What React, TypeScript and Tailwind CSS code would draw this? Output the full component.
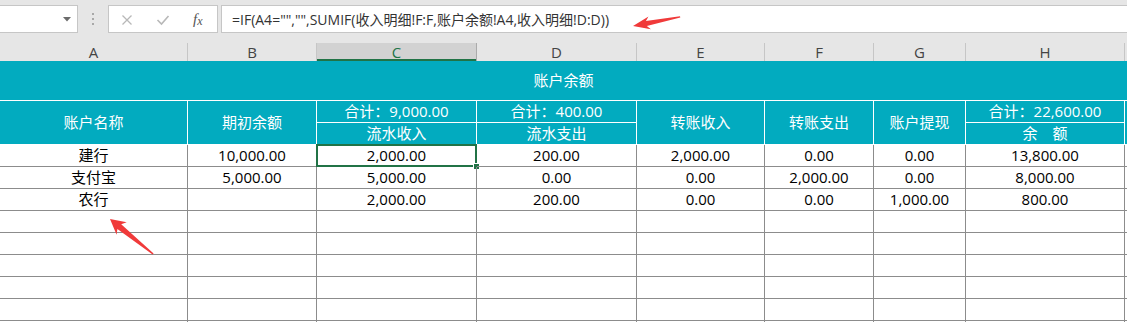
import React from "react";

const rows: string[][] = [
  ["建行", "10,000.00", "2,000.00", "200.00", "2,000.00", "0.00", "0.00", "13,800.00"],
  ["支付宝", "5,000.00", "5,000.00", "0.00", "0.00", "2,000.00", "0.00", "8,000.00"],
  ["农行", "", "2,000.00", "200.00", "0.00", "0.00", "1,000.00", "800.00"],
  ["", "", "", "", "", "", "", ""],
  ["", "", "", "", "", "", "", ""],
  ["", "", "", "", "", "", "", ""],
  ["", "", "", "", "", "", "", ""],
  ["", "", "", "", "", "", "", ""],
  ["", "", "", "", "", "", "", ""],
];

const letters = ["A", "B", "C", "D", "E", "F", "G", "H"];

const cols = "grid grid-cols-[188px_129px_160px_160px_128px_109px_92px_159px_1fr]";

function Arrows() {
  return (
    <svg
      className="pointer-events-none absolute left-0 top-0"
      width="1127"
      height="322"
      viewBox="0 0 1127 322"
    >
      <polygon
        fill="#f03a3a"
        points="633,26 648.5,16.4 645.9,21.0 680,16.2 680.3,17.6 646.8,25.9 650.9,29.2"
      />
      <polygon
        fill="#f03a3a"
        points="110,219 126.7,222.3 121.2,224.2 153.6,253.6 152.6,254.6 117.4,228.9 116.6,234.7"
      />
    </svg>
  );
}

export default function App() {
  return (
    <div className="relative h-[322px] w-[1127px] overflow-hidden bg-white font-['Open_Sans','Noto_Sans_CJK_SC',sans-serif]">
      {/* formula bar */}
      <div className="flex h-[43px] items-start bg-[#e6e6e6] pt-[5px]">
        <div className="relative h-[28px] w-[78px] border border-l-0 border-[#c6c6c6] bg-white">
          <svg className="absolute left-[63px] top-[11px]" width="8" height="5" viewBox="0 0 8 5">
            <polygon points="0,0 8,0 4,4.5" fill="#6b6b6b" />
          </svg>
        </div>
        <div className="flex h-[28px] w-[30px] flex-col items-center justify-center gap-[3px]">
          <div className="h-[2px] w-[2px] bg-[#a8a8a8]" />
          <div className="h-[2px] w-[2px] bg-[#a8a8a8]" />
          <div className="h-[2px] w-[2px] bg-[#a8a8a8]" />
        </div>
        <div className="relative h-[28px] w-[110px] border border-[#c6c6c6] bg-white">
          <svg className="absolute left-[12px] top-[8px]" width="12" height="12" viewBox="0 0 12 12">
            <path d="M1.5 1.5 L10.5 10.5 M10.5 1.5 L1.5 10.5" stroke="#b8b8b8" strokeWidth="1.3" fill="none" />
          </svg>
          <svg className="absolute left-[47px] top-[8px]" width="14" height="12" viewBox="0 0 14 12">
            <path d="M1.5 6 L5.5 10 L12.5 2" stroke="#b8b8b8" strokeWidth="1.6" fill="none" />
          </svg>
          <div className="absolute left-[84px] top-[3px] font-['Liberation_Serif',serif] text-[15px] italic leading-[20px] text-[#555]">
            f<span className="relative top-[1px] text-[12px]">x</span>
          </div>
        </div>
        <div className="ml-[3px] flex h-[28px] flex-1 items-center border border-r-0 border-[#c6c6c6] bg-white pl-[10px] text-[14px] text-[#333]">
          =IF(A4="","",SUMIF(收入明细!F:F,账户余额!A4,收入明细!D:D))
        </div>
      </div>

      {/* column headers */}
      <div className={`${cols} h-[18px] bg-[#e6e6e6]`}>
        {letters.map((l) => (
          <div
            key={l}
            className={
              l === "C"
                ? "flex items-center justify-center border-r border-[#ababab] bg-[#d2d2d2] text-[15px] leading-none text-[#217346] shadow-[inset_0_-2px_0_#217346]"
                : "flex items-center justify-center border-r border-[#c6c6c6] text-[15px] leading-none text-[#444]"
            }
          >
            {l}
          </div>
        ))}
        <div />
      </div>

      {/* teal header */}
      <div className={`${cols} grid-rows-[40px_22px_22px] bg-[#02abbf] text-[15px] leading-none text-white`}>
        <div className="col-span-9 row-start-1 flex items-center justify-center border-b border-white">账户余额</div>
        <div className="col-start-1 row-span-2 row-start-2 flex items-center justify-center border-b border-r border-white">账户名称</div>
        <div className="col-start-2 row-span-2 row-start-2 flex items-center justify-center border-b border-r border-white">期初余额</div>
        <div className="col-start-3 row-start-2 flex items-center justify-center border-b border-r border-white">合计：9,000.00</div>
        <div className="col-start-3 row-start-3 flex items-center justify-center border-b border-r border-white">流水收入</div>
        <div className="col-start-4 row-start-2 flex items-center justify-center border-b border-r border-white">合计：400.00</div>
        <div className="col-start-4 row-start-3 flex items-center justify-center border-b border-r border-white">流水支出</div>
        <div className="col-start-5 row-span-2 row-start-2 flex items-center justify-center border-b border-r border-white">转账收入</div>
        <div className="col-start-6 row-span-2 row-start-2 flex items-center justify-center border-b border-r border-white">转账支出</div>
        <div className="col-start-7 row-span-2 row-start-2 flex items-center justify-center border-b border-r border-white">账户提现</div>
        <div className="col-start-8 row-start-2 flex items-center justify-center border-b border-r border-white">合计：22,600.00</div>
        <div className="col-start-8 row-start-3 flex items-center justify-center border-b border-r border-white">余　额</div>
        <div className="col-start-9 row-span-2 row-start-2 border-b border-white" />
      </div>

      {/* data rows */}
      {rows.map((r, ri) => (
        <div key={ri} className={`${cols} h-[22px] text-[15px] leading-none text-black`}>
          {r.map((v, ci) => (
            <div
              key={ci}
              className="relative flex items-center justify-center border-b border-r border-[#8c8c8c]"
            >
              {v}
              {ri === 0 && ci === 2 && (
                <div className="absolute left-[-1px] top-[-1px] h-[23px] w-[161px] border-2 border-[#217346]">
                  <div className="absolute bottom-[-5px] right-[-5px] h-[7px] w-[7px] border border-white bg-[#217346]" />
                </div>
              )}
            </div>
          ))}
          <div className="border-b border-[#8c8c8c]" />
        </div>
      ))}

      <Arrows />
    </div>
  );
}
